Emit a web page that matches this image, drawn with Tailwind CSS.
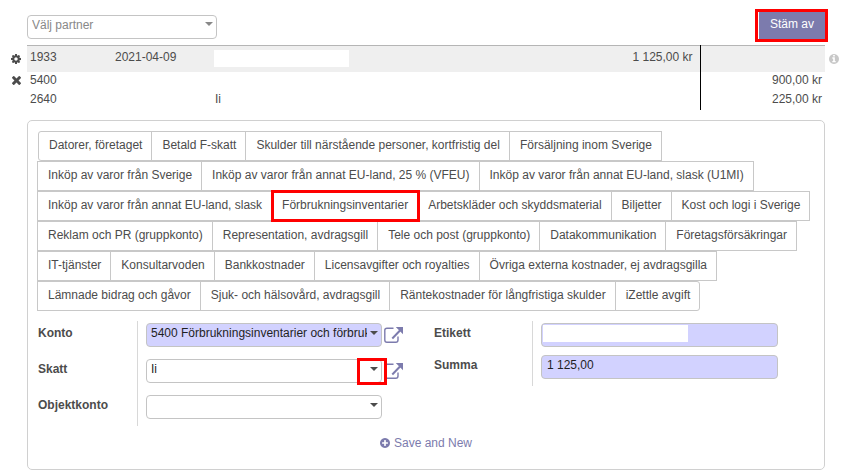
<!DOCTYPE html>
<html lang="sv">
<head>
<meta charset="utf-8">
<title>Avstämning</title>
<script src="https://cdn.jsdelivr.net/npm/@tailwindcss/browser@4"></script>
</head>
<body class="bg-white font-['Liberation_Sans',Arial,sans-serif] text-xs text-[#4c4c4c]">
<svg class="hidden" aria-hidden="true">
  <symbol id="caret" viewBox="0 0 8 4"><path d="M0 0h8L4 4z" fill="currentColor"/></symbol>
  <symbol id="external" viewBox="0 0 19 16">
    <path d="M9.500 1.200H3Q.8 1.200.8 3.200V13Q.8 15.200 3 15.200H11.800Q14 15.200 14 13V9.500" fill="none" stroke="currentColor" stroke-width="1.400"/>
    <path d="M8.300 11.500L16 3.500" fill="none" stroke="currentColor" stroke-width="2"/>
    <path d="M11.800 0H19V7.200L16.800 5 14 2.300z" fill="currentColor"/>
  </symbol>
</svg>

<header class="flex items-start justify-between pt-3 pr-[26px] pl-[27px]">
  <div class="relative mt-[3px] text-[#888]">
    <select aria-label="Välj partner" class="block h-6 w-[190px] appearance-none rounded border border-[#c4c4c4] bg-white pr-4 pb-1 pl-1 text-[#888]"><option>Välj partner</option></select>
    <svg class="pointer-events-none absolute top-[7px] right-1 h-1 w-2"><use href="#caret"/></svg>
  </div>
  <div class="relative">
    <button type="button" class="block h-[27px] bg-[#7c7bad] px-[11px] pb-[3px] text-white">Stäm av</button>
    <span class="pointer-events-none absolute -top-[3px] -right-[3px] -bottom-[3px] -left-1 border-3 border-[#ff0000]"></span>
  </div>
</header>

<main>
  <table class="mt-[6px] w-full table-fixed border-collapse leading-4">
    <colgroup>
      <col class="w-[27px]"><col class="w-[85px]"><col class="w-[100px]"><col><col class="w-[120px]"><col class="w-[125px]"><col class="w-[26px]">
    </colgroup>
    <tbody>
      <tr class="h-[26px] align-top">
        <td class="pt-2 pl-[11px]"><button type="button" aria-label="Inställningar" class="block"><svg class="size-[10px]" viewBox="128 128 1536 1536" fill="currentColor"><path d="M1152 896q0-106-75-181t-181-75-181 75-75 181 75 181 181 75 181-75 75-181zm512-109v222q0 12-8 23t-20 13l-185 28q-19 54-39 91 35 50 107 138 10 12 10 25t-9 23q-27 37-99 108t-94 71q-12 0-26-9l-138-108q-44 23-91 38-16 136-29 186-7 28-36 28h-222q-14 0-24.500-8.500t-11.500-21.500l-28-184q-49-16-90-37l-141 107q-10 9-25 9-14 0-25-11-126-114-165-168-7-10-7-23 0-12 8-23 15-21 51-66.500t54-70.500q-27-50-41-99l-183-27q-13-2-21-12.500t-8-23.500v-222q0-12 8-23t19-13l186-28q14-46 39-92-40-57-107-138-10-12-10-24 0-10 9-23 26-36 98.500-107.500t94.500-71.500q13 0 26 10l138 107q44-23 91-38 16-136 29-186 7-28 36-28h222q14 0 24.500 8.500t11.500 21.500l28 184q49 16 90 37l142-107q9-9 24-9 13 0 25 10 129 119 165 170 7 8 7 22 0 12-8 23-15 21-51 66.500t-54 70.500q26 50 41 98l183 28q13 2 21 12.500t8 23.500z"/></svg></button></td>
        <td class="border-t border-[#b5b5b5] bg-[#efefef] pt-[3px] pl-[3px]">1933</td>
        <td class="border-t border-[#b5b5b5] bg-[#efefef] pt-[3px] pl-[3px]">2021-04-09</td>
        <td class="border-t border-[#b5b5b5] bg-[#efefef] pt-1 pl-[2px]"><span class="block h-[17px] w-[135px] bg-white"></span></td>
        <td class="border-t border-r border-t-[#b5b5b5] border-r-black bg-[#efefef] pt-[3px] pr-[7px] text-right">1 125,00 kr</td>
        <td class="border-t border-[#b5b5b5] bg-[#efefef]"></td>
        <td class="pt-2 pl-1 text-[#c8c8c8]"><button type="button" aria-label="Information" class="block"><svg class="size-[10px]" viewBox="128 128 1536 1536" fill="currentColor"><path d="M1152 1376v-160q0-14-9-23t-23-9h-96v-512q0-14-9-23t-23-9h-320q-14 0-23 9t-9 23v160q0 14 9 23t23 9h96v320h-96q-14 0-23 9t-9 23v160q0 14 9 23t23 9h448q14 0 23-9t9-23zm-128-896v-160q0-14-9-23t-23-9h-192q-14 0-23 9t-9 23v160q0 14 9 23t23 9h192q14 0 23-9t9-23zm640 416q0 209-103 385.500t-279.500 279.500-385.500 103-385.500-103-279.500-279.500-103-385.500 103-385.500 279.500-279.500 385.500-103 385.500 103 279.500 279.500 103 385.500z"/></svg></button></td>
      </tr>
      <tr class="h-[19px] align-top">
        <td class="pt-1 pl-3"><button type="button" aria-label="Ta bort" class="block"><svg class="size-[9px]" viewBox="302 366 1188 1188" fill="currentColor"><path d="M1490 1322q0 40-28 68l-136 136q-28 28-68 28t-68-28l-294-294-294 294q-28 28-68 28t-68-28l-136-136q-28-28-28-68t28-68l294-294-294-294q-28-28-28-68t28-68l136-136q28-28 68-28t68 28l294 294 294-294q28-28 68-28t68 28l136 136q28 28 28 68t-28 68l-294 294 294 294q28 28 28 68z"/></svg></button></td>
        <td class="pl-[3px]">5400</td><td></td><td></td>
        <td class="border-r border-black"></td>
        <td class="pr-[3px] text-right">900,00 kr</td><td></td>
      </tr>
      <tr class="h-[19px] align-top">
        <td></td><td class="pl-[3px]">2640</td><td></td><td class="pl-[3px]">Ii</td>
        <td class="border-r border-black"></td>
        <td class="pr-[3px] text-right">225,00 kr</td><td></td>
      </tr>
    </tbody>
  </table>

  <section class="mt-[10px] mr-[26px] ml-[27px] rounded-[5px] border border-[#d0d0d0] px-[10px] pt-[10px] pb-[18px]">
    <div class="flex flex-wrap leading-4 [&>button]:relative [&>button]:-ml-px [&>button]:h-[30px] [&>button]:border [&>button]:border-[#c8c8c8] [&>button]:pr-[9px] [&>button]:pl-[10px] [&>button]:pb-[2px] [&>button:first-child]:ml-0 [&>button:first-child]:rounded-l-[3px] [&>button:last-child]:rounded-r-[3px]">
      <button type="button">Datorer, företaget</button>
      <button type="button">Betald F-skatt</button>
      <button type="button">Skulder till närstående personer, kortfristig del</button>
      <button type="button">Försäljning inom Sverige</button>
      <button type="button">Inköp av varor från Sverige</button>
      <button type="button">Inköp av varor från annat EU-land, 25 % (VFEU)</button>
      <button type="button">Inköp av varor från annat EU-land, slask (U1MI)</button>
      <button type="button">Inköp av varor från annat EU-land, slask</button>
      <button type="button">Förbrukningsinventarier<span class="pointer-events-none absolute -top-[2px] -right-[3px] -bottom-[2px] -left-px z-10 border-3 border-[#ff0000]"></span></button>
      <button type="button">Arbetskläder och skyddsmaterial</button>
      <button type="button">Biljetter</button>
      <button type="button">Kost och logi i Sverige</button>
      <button type="button">Reklam och PR (gruppkonto)</button>
      <button type="button">Representation, avdragsgill</button>
      <button type="button">Tele och post (gruppkonto)</button>
      <button type="button">Datakommunikation</button>
      <button type="button">Företagsförsäkringar</button>
      <button type="button">IT-tjänster</button>
      <button type="button">Konsultarvoden</button>
      <button type="button">Bankkostnader</button>
      <button type="button">Licensavgifter och royalties</button>
      <button type="button">Övriga externa kostnader, ej avdragsgilla</button>
      <button type="button">Lämnade bidrag och gåvor</button>
      <button type="button">Sjuk- och hälsovård, avdragsgill</button>
      <button type="button">Räntekostnader för långfristiga skulder</button>
      <button type="button">iZettle avgift</button>
    </div>

    <form class="mt-[10px] grid grid-cols-2 items-start gap-4 leading-4">
      <div class="grid grid-cols-[99px_1fr]">
        <div class="flex flex-col gap-3 pt-[2px] font-bold">
          <label for="konto" class="h-6 pt-[2px]">Konto</label>
          <label for="skatt" class="h-6 pt-[2px]">Skatt</label>
          <label for="objekt" class="h-6 pt-[2px]">Objektkonto</label>
        </div>
        <div class="flex flex-col gap-3 border-l border-[#d8d8d8] pt-[2px] pb-[7px] pl-2">
          <div class="grid grid-cols-[1fr_36px] items-center">
            <div class="relative">
              <select id="konto" class="block h-6 w-full appearance-none rounded border border-[#c4c4c4] bg-[#d2d2ff] pr-[14px] pb-1 pl-1 text-[#1f1f1f]"><option>5400 Förbrukningsinventarier och förbrukningsmaterial</option></select>
              <svg class="pointer-events-none absolute top-2 right-1 h-1 w-2"><use href="#caret"/></svg>
            </div>
            <button type="button" aria-label="Öppna konto" class="ml-[2px] w-[19px] text-[#7c7bad]"><svg class="block h-4 w-[19px]"><use href="#external"/></svg></button>
          </div>
          <div class="grid grid-cols-[1fr_36px] items-center">
            <div class="relative">
              <select id="skatt" class="block h-6 w-full appearance-none rounded border border-[#c4c4c4] bg-white pr-[14px] pb-1 pl-1 text-[#1f1f1f]"><option>Ii</option></select>
              <svg class="pointer-events-none absolute top-2 right-1 h-1 w-2"><use href="#caret"/></svg>
              <span class="pointer-events-none absolute -top-px -right-[5px] -bottom-[2px] z-10 w-[30px] border-3 border-[#ff0000]"></span>
            </div>
            <button type="button" aria-label="Öppna skatt" class="ml-[2px] w-[19px] text-[#7c7bad]"><svg class="block h-4 w-[19px]"><use href="#external"/></svg></button>
          </div>
          <div class="grid grid-cols-[1fr_36px] items-center">
            <div class="relative">
              <select id="objekt" aria-label="Objektkonto" class="block h-6 w-full appearance-none rounded border border-[#c4c4c4] bg-white pr-[14px] pb-1 pl-1 text-[#1f1f1f]"><option></option></select>
              <svg class="pointer-events-none absolute top-2 right-1 h-1 w-2"><use href="#caret"/></svg>
            </div>
          </div>
        </div>
      </div>
      <div class="grid grid-cols-[98px_1fr]">
        <div class="flex flex-col gap-2 pt-[2px] font-bold">
          <label for="etikett" class="h-6 pt-[2px]">Etikett</label>
          <label for="summa" class="h-6 pt-[2px]">Summa</label>
        </div>
        <div class="flex flex-col gap-2 border-l border-[#d8d8d8] pt-[2px] pr-9 pb-[7px] pl-2">
          <div class="relative">
            <input id="etikett" type="text" class="block h-6 w-full rounded border border-[#c4c4c4] bg-[#d2d2ff] px-[5px] pb-1 text-[#1f1f1f]">
            <span class="pointer-events-none absolute top-[2px] left-[2px] h-[17px] w-[145px] bg-white"></span>
          </div>
          <input id="summa" type="text" value="1 125,00" class="block h-6 w-full rounded border border-[#c4c4c4] bg-[#d2d2ff] px-[5px] pb-1 text-[#1f1f1f]">
        </div>
      </div>
    </form>

    <div class="mt-[9px] flex justify-center leading-4">
      <button type="button" class="flex items-center gap-1 text-[#7c7bad]"><svg class="size-[10px]" viewBox="128 128 1536 1536" fill="currentColor"><path d="M1344 960v-128q0-26-19-45t-45-19h-256v-256q0-26-19-45t-45-19h-128q-26 0-45 19t-19 45v256h-256q-26 0-45 19t-19 45v128q0 26 19 45t45 19h256v256q0 26 19 45t45 19h128q26 0 45-19t19-45v-256h256q26 0 45-19t19-45zm320-64q0 209-103 385.500t-279.500 279.500-385.500 103-385.500-103-279.500-279.500-103-385.500 103-385.500 279.500-279.500 385.500-103 385.500 103 279.500 279.500 103 385.500z"/></svg>Save and New</button>
    </div>
  </section>
</main>
</body>
</html>
